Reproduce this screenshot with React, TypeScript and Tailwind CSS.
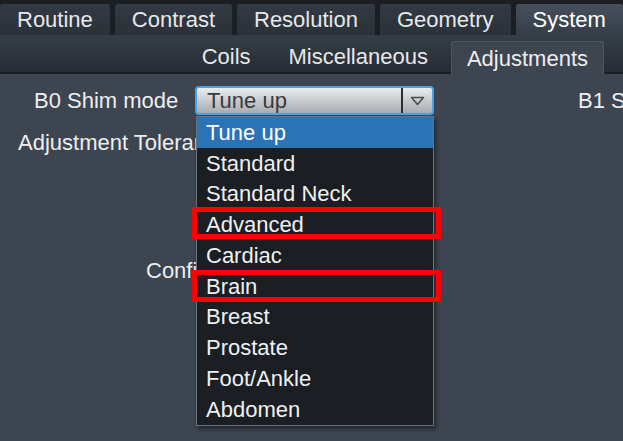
const topTabs = ["Routine", "Contrast", "Resolution", "Geometry", "System"];
const subTabs = ["Coils", "Miscellaneous", "Adjustments"];
const shimModes = [
  "Tune up",
  "Standard",
  "Standard Neck",
  "Advanced",
  "Cardiac",
  "Brain",
  "Breast",
  "Prostate",
  "Foot/Ankle",
  "Abdomen",
];

const ShimSelect = () => {
  return (
    <div className="relative w-[239px] h-[29px] shrink-0">
      <div className="flex h-full rounded-[4px] border-2 border-[#4aa3e8] bg-gradient-to-b from-[#ebeced] to-[#a7acb1] overflow-hidden">
        <div className="flex-1 flex items-center pl-[10px] text-[#3a3a3a]">Tune up</div>
        <div className="w-[31px] border-l-2 border-[#2a2d31] flex items-center justify-center">
          <svg width="15" height="10" viewBox="0 0 15 10">
            <polygon points="1.5,1.5 13.5,1.5 7.5,8.5" fill="none" stroke="#4a4f55" strokeWidth="1.6" strokeLinejoin="round" />
          </svg>
        </div>
      </div>
      <ul className="absolute left-[1px] top-[30px] w-[238px] bg-[#1b1f24] border border-[#6b747d] shadow-[2px_3px_4px_rgba(0,0,0,0.45)] z-10">
        {shimModes.map((m, i) => (
          <li
            key={m}
            className={`h-[30.75px] flex items-center pl-[9px] ${
              i === 0 ? "bg-[#2a73b4] text-white" : "text-[#eef0f2]"
            }`}
          >
            {m}
          </li>
        ))}
      </ul>
    </div>
  );
};

export default function App() {
  return (
    <div className="relative w-[623px] h-[441px] overflow-hidden flex flex-col bg-[#3c4550] font-['Liberation_Sans',Arial,sans-serif] text-[22px] leading-[25px] text-[#eceef0]">
      {/* main tabs */}
      <div className="h-[35px] bg-[#1b1f24] flex items-end gap-[5px] shrink-0">
        {topTabs.map((t) => (
          <div
            key={t}
            className={`h-[31px] px-[17px] shrink-0 flex items-center rounded-t-[3px] whitespace-nowrap ${
              t === "System"
                ? "bg-gradient-to-b from-[#46505b] to-[#353e48] text-white"
                : "bg-gradient-to-b from-[#323a43] to-[#2a3139] text-[#e6e8ea]"
            }`}
          >
            {t}
          </div>
        ))}
      </div>

      {/* sub tabs */}
      <div className="h-[39px] shrink-0 bg-gradient-to-b from-[#353e47] to-[#262c33] border-b-2 border-[#1a1e22] flex items-end justify-end gap-[8px] pr-[19px]">
        {subTabs.map((t) => (
          <div
            key={t}
            className={`px-[15px] shrink-0 flex items-center whitespace-nowrap ${
              t === "Adjustments"
                ? "bg-[#3c4550] rounded-t-[3px] border-t border-x border-[#4c5661] -mb-[2px] h-[33px]"
                : "h-[32px] text-[#e6e8ea]"
            }`}
          >
            {t}
          </div>
        ))}
      </div>

      {/* form */}
      <div className="flex-1 relative">
        <div className="mt-[12px] flex items-center whitespace-nowrap">
          <div className="w-[195px] shrink-0 pl-[34px]">B0 Shim mode</div>
          <ShimSelect />
          <div className="ml-[144px] shrink-0">B1 Shim mode</div>
        </div>
        <div className="mt-[15px] pl-[18px] whitespace-nowrap">Adjustment Tolerance</div>
        <div className="mt-[103px] pl-[146px] whitespace-nowrap">Confirm freq. adjustment</div>
      </div>

      {/* annotation boxes */}
      <div className="absolute left-[192px] top-[207px] w-[249px] h-[32px] border-[5px] border-[#ff0000] z-20" />
      <div className="absolute left-[192px] top-[270px] w-[249px] h-[32px] border-[5px] border-[#ff0000] z-20" />
    </div>
  );
}
